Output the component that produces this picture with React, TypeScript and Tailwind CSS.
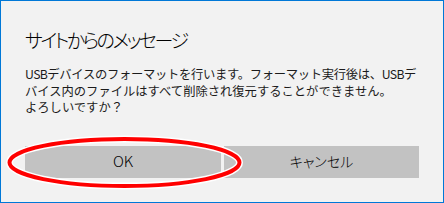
import React from "react"

const jp = "font-['Noto_Sans_CJK_JP','Noto_Sans',sans-serif]"

export default function App() {
  return (
    <div className={`relative w-[444px] h-[203px] bg-[#f2f2f2] border border-[#0078d7] text-black ${jp}`}>
      <div className="px-6 pt-[27px]">
        {/* タイトル */}
        <h1 className="text-[19px] leading-[24px] font-light tracking-[-2.5px] whitespace-nowrap [font-feature-settings:'palt']">
          サイトからのメッセージ
        </h1>

        {/* 本文 */}
        <p className="mt-[14px] text-[12.3px] leading-[16.5px] text-[#1b1b1b] whitespace-nowrap">
          <span className="tracking-[-0.3px]">
            <span className="tracking-[-0.6px]">USB</span>デバイスのフォーマットを行います。フォーマット実行後は、<span className="tracking-[-0.6px]">USB</span>デ
          </span>
          <br />
          バイス内のファイルはすべて削除され復元することができません。
          <br />
          よろしいですか？
        </p>

        {/* ボタン */}
        <div className="mt-[30px] flex gap-[3px]">
          <button className="w-[196px] h-[32px] bg-[#c2c2c2] text-[15px] font-light text-black">
            OK
          </button>
          <button className="w-[195px] h-[32px] bg-[#c2c2c2] text-[14px] font-light text-black [font-feature-settings:'palt']">
            キャンセル
          </button>
        </div>
      </div>

      {/* 赤丸 */}
      <svg className="absolute left-0 top-0 pointer-events-none" width="444" height="203">
        <ellipse cx="123.5" cy="161.5" rx="115" ry="23.5" fill="none" stroke="#ffffff" strokeWidth="7" />
        <ellipse cx="123.5" cy="161.5" rx="115" ry="23.5" fill="none" stroke="#ff0000" strokeWidth="4" />
      </svg>
    </div>
  )
}
